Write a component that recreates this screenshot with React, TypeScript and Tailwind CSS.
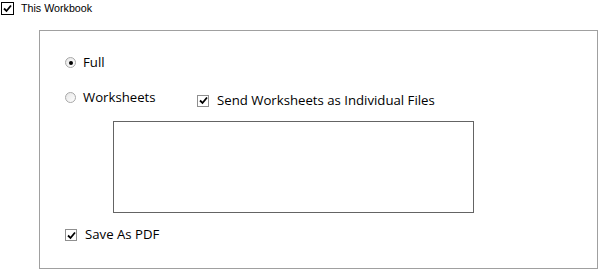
import React from "react";

function Check({ dark = false }: { dark?: boolean }) {
  return (
    <span
      className={
        dark
          ? "flex h-[13px] w-[13px] shrink-0 items-center justify-center border border-black bg-white"
          : "flex h-[12px] w-[12px] shrink-0 items-center justify-center border border-[#8f8f8f] bg-white"
      }
    >
      <svg width="9" height="9" viewBox="0 0 9 9">
        <path d="M1 4.5 L3.5 7 L8 1.5" stroke="#000" strokeWidth="1.8" fill="none" />
      </svg>
    </span>
  );
}

function Radio({ on = false }: { on?: boolean }) {
  return (
    <span className="flex h-[11px] w-[11px] shrink-0 items-center justify-center rounded-full border border-[#a8a8a8] bg-gradient-to-br from-[#e6e6e6] to-white">
      {on && <span className="h-[4px] w-[4px] rounded-full bg-black" />}
    </span>
  );
}

export default function App() {
  return (
    <div className="h-[271px] w-[599px] overflow-hidden bg-white font-['Open_Sans',sans-serif] text-black">
      {/* header checkbox */}
      <div className="flex h-[15px] items-center gap-[7px] pl-[1px] pt-[1px]">
        <Check dark />
        <span className="font-['Liberation_Sans',sans-serif] text-[10.7px] leading-none">This Workbook</span>
      </div>

      {/* frame */}
      <div className="ml-[39px] mt-[15px] flex h-[239px] w-[559px] flex-col border border-[#a0a0a0] pl-[25px]">
        <div className="mt-[26px] flex h-[11px] items-center gap-[7px]">
          <Radio on />
          <span className="mt-[1px] text-[13.2px] leading-none">Full</span>
        </div>

        <div className="mt-[24px] flex h-[11px] items-center">
          <div className="flex w-[132px] items-center gap-[7px]">
            <Radio />
            <span className="mt-[1px] text-[13.2px] leading-none">Worksheets</span>
          </div>
          <div className="mt-[6px] flex items-center gap-[8px]">
            <Check />
            <span className="text-[13.2px] leading-none">Send Worksheets as Individual Files</span>
          </div>
        </div>

        <div className="ml-[48px] mt-[18px] h-[92px] w-[361px] border border-[#646464] bg-white" />

        <div className="mt-[16px] flex h-[12px] items-center gap-[8px]">
          <Check />
          <span className="text-[13.2px] leading-none">Save As PDF</span>
        </div>
      </div>
    </div>
  );
}
